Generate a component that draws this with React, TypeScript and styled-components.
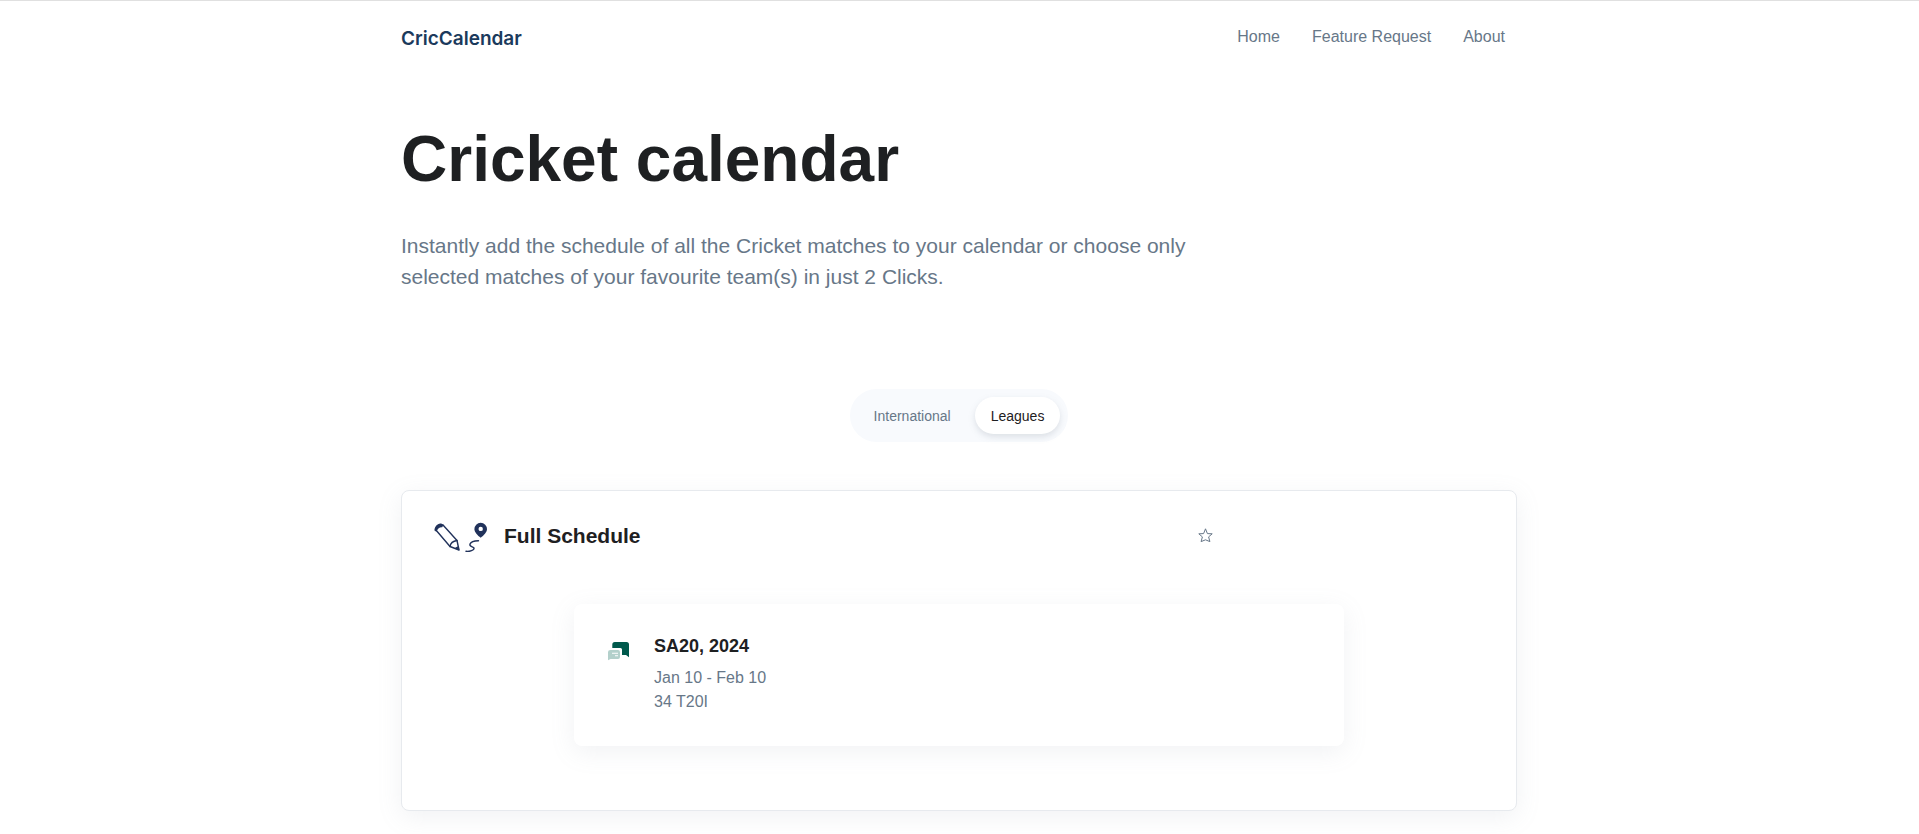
import React, { useState } from "react";
import styled, { createGlobalStyle } from "styled-components";

const GlobalStyle = createGlobalStyle`
  *, *::before, *::after { box-sizing: border-box; }
  body {
    margin: 0;
    background: #fff;
    border-top: 1px solid #e0e0e0;
    color: #677788;
    font-family: "Liberation Sans", Arial, sans-serif;
    font-size: 16px;
    line-height: 24px;
  }
  h1, h2, h3, p { margin: 0; }
  a { text-decoration: none; }
`;

const Container = styled.div`
  width: 100%;
  max-width: 1141px;
  margin: 0 auto;
  padding: 0 13px 0 12px;
`;

const Header = styled.header`
  display: flex;
  justify-content: space-between;
  align-items: center;
  height: 72px;
`;

const Brand = styled.a`
  color: #1b3a5c;
  font-family: Inter, sans-serif;
  font-size: 19px;
  font-weight: 600;
  padding-top: 4px;
`;

const Nav = styled.nav`
  display: flex;
  gap: 32px;
  padding-right: 12px;
`;

const NavLink = styled.a`
  color: #677788;
`;

const Hero = styled.section`
  max-width: 800px;
  padding-top: 48px;
`;

const Title = styled.h1`
  color: #1e2022;
  font-size: 64px;
  line-height: 77px;
`;

const Lead = styled.p`
  margin-top: 32px;
  font-size: 21px;
  line-height: 31px;
`;

const Tabs = styled.div`
  display: flex;
  width: fit-content;
  margin: 97px auto 48px;
  padding: 8px;
  border-radius: 27px;
  background: #f8fafd;
`;

const Tab = styled.button<{ $active: boolean }>`
  height: 37px;
  padding: 0 16px;
  border: 0;
  border-radius: 19px;
  background: ${(p) => (p.$active ? "#fff" : "transparent")};
  box-shadow: ${(p) => (p.$active ? "0 3px 6px rgba(140, 152, 164, 0.25)" : "none")};
  color: ${(p) => (p.$active ? "#1e2022" : "#677788")};
  font: inherit;
  font-size: 14px;
  cursor: pointer;

  & + & { margin-left: 8px; }
`;

const Card = styled.section`
  margin-bottom: 24px;
  padding: 31px 32px 64px;
  border: 1px solid #e7eaee;
  border-radius: 8px;
  background: #fff;
  box-shadow: 0 6px 24px rgba(140, 152, 164, 0.125);
`;

const CardHeader = styled.div`
  display: grid;
  grid-template-columns: 8fr 3fr;
  align-items: start;
`;

const CardTitle = styled.div`
  display: flex;
  align-items: flex-start;
  gap: 16px;
`;

const Heading = styled.h2`
  color: #1e2022;
  font-size: 21px;
  line-height: 28px;
`;

const StarButton = styled.button`
  display: flex;
  align-items: center;
  width: 16px;
  height: 28px;
  padding: 0;
  border: 0;
  background: none;
  color: #677788;
  cursor: pointer;
`;

const League = styled.a`
  display: flex;
  align-items: flex-start;
  gap: 24px;
  max-width: 770px;
  margin: 50px auto 0;
  padding: 28px 32px 32px;
  border-radius: 8px;
  background: #fff;
  box-shadow: 0 6px 24px rgba(140, 152, 164, 0.125);
  color: #677788;
`;

const LeagueIcon = styled.svg`
  flex: none;
  margin-top: 8px;
`;

const LeagueName = styled.h3`
  margin-bottom: 6px;
  color: #1e2022;
  font-size: 18px;
  line-height: 28px;
`;

const RouteIcon = () => (
  <svg width="54" height="32" viewBox="0 0 54 32" fill="none" aria-hidden="true">
    <g stroke="#21325b" strokeWidth="1.4" strokeLinejoin="round" strokeLinecap="round">
      <path d="M1.5 7.5 L16 24.5 L25 28 L23 18.5 L9 3" />
      <path d="M16 24.5 C16.5 21.5 19.5 19 23 18.5" />
      <path d="M32 29.3 C35.5 29.8 40.5 28 40 26 C39.5 24.5 35 25 36 22 C37 19.5 40.5 19 44.5 18.8" />
    </g>
    <path d="M.7 9 C0 6.5 1.5 3.5 4 2.2 C6 1 8 1.3 9.5 3 L8.2 5.2 C5.5 5 3 7 2.7 9.5 Z" fill="#21325b" />
    <path d="M21 26.3 L25.3 28.5 L24.8 24.3 C23 24.3 21.5 25.3 21 26.3 Z" fill="#21325b" />
    <path
      fillRule="evenodd"
      d="M46.7 .8 A6.3 6.3 0 0 1 53 7.2 C53 10 49.7 13.5 46.7 15.7 C43.7 13.5 40.4 10 40.4 7.2 A6.3 6.3 0 0 1 46.7 .8 Z M46.7 4.7 A2.2 2.2 0 1 0 46.7 9.1 A2.2 2.2 0 1 0 46.7 4.7 Z"
      fill="#21325b"
    />
  </svg>
);

const StarIcon = () => (
  <svg width="16" height="16" viewBox="0 0 16 16" fill="none" aria-hidden="true">
    <path
      d="M7.5 .8 L9.4 5.6 L14.2 5.8 L10.6 8.9 L11.9 13.6 L7.5 11.8 L3.1 13.6 L4.4 8.9 L.8 5.8 L5.6 5.6 Z"
      stroke="currentColor"
      strokeLinejoin="round"
    />
  </svg>
);

const links = ["Home", "Feature Request", "About"];
const tabs = ["International", "Leagues"];

export default function App() {
  const [active, setActive] = useState("Leagues");

  return (
    <>
      <GlobalStyle />
      <Container>
        <Header>
          <Brand href="#">CricCalendar</Brand>
          <Nav>
            {links.map((label) => (
              <NavLink key={label} href="#">{label}</NavLink>
            ))}
          </Nav>
        </Header>
        <main>
          <Hero>
            <Title>Cricket calendar</Title>
            <Lead>
              Instantly add the schedule of all the Cricket matches to your calendar or choose only
              selected matches of your favourite team(s) in just 2 Clicks.
            </Lead>
          </Hero>
          <Tabs role="tablist">
            {tabs.map((label) => (
              <Tab
                key={label}
                type="button"
                role="tab"
                aria-selected={active === label}
                $active={active === label}
                onClick={() => setActive(label)}
              >
                {label}
              </Tab>
            ))}
          </Tabs>
          <Card>
            <CardHeader>
              <CardTitle>
                <RouteIcon />
                <Heading>Full Schedule</Heading>
              </CardTitle>
              <StarButton type="button" aria-label="Add to favourites">
                <StarIcon />
              </StarButton>
            </CardHeader>
            <League href="#">
              <LeagueIcon width="24" height="24" viewBox="0 0 24 24" aria-hidden="true">
                <path
                  d="M6.3 7 V4.5 Q6.3 2 8.8 2 H20.5 Q23 2 23 4.5 V17.3 L20 15 H16 V9.5 Q16 8 14.5 8 H6.3 Z"
                  fill="#00594c"
                />
                <path
                  fillRule="evenodd"
                  d="M4.5 10 H12 Q14 10 14 12 V17 Q14 19 12 19 H4.5 L2 20.3 V12 Q2 10 4.5 10 Z M6 12.7 V13.8 H12 V12.7 Z M9 15.2 V16.3 H12 V15.2 Z"
                  fill="#b3d0cb"
                />
              </LeagueIcon>
              <div>
                <LeagueName>SA20, 2024</LeagueName>
                <p>Jan 10 - Feb 10</p>
                <p>34 T20I</p>
              </div>
            </League>
          </Card>
        </main>
      </Container>
    </>
  );
}
